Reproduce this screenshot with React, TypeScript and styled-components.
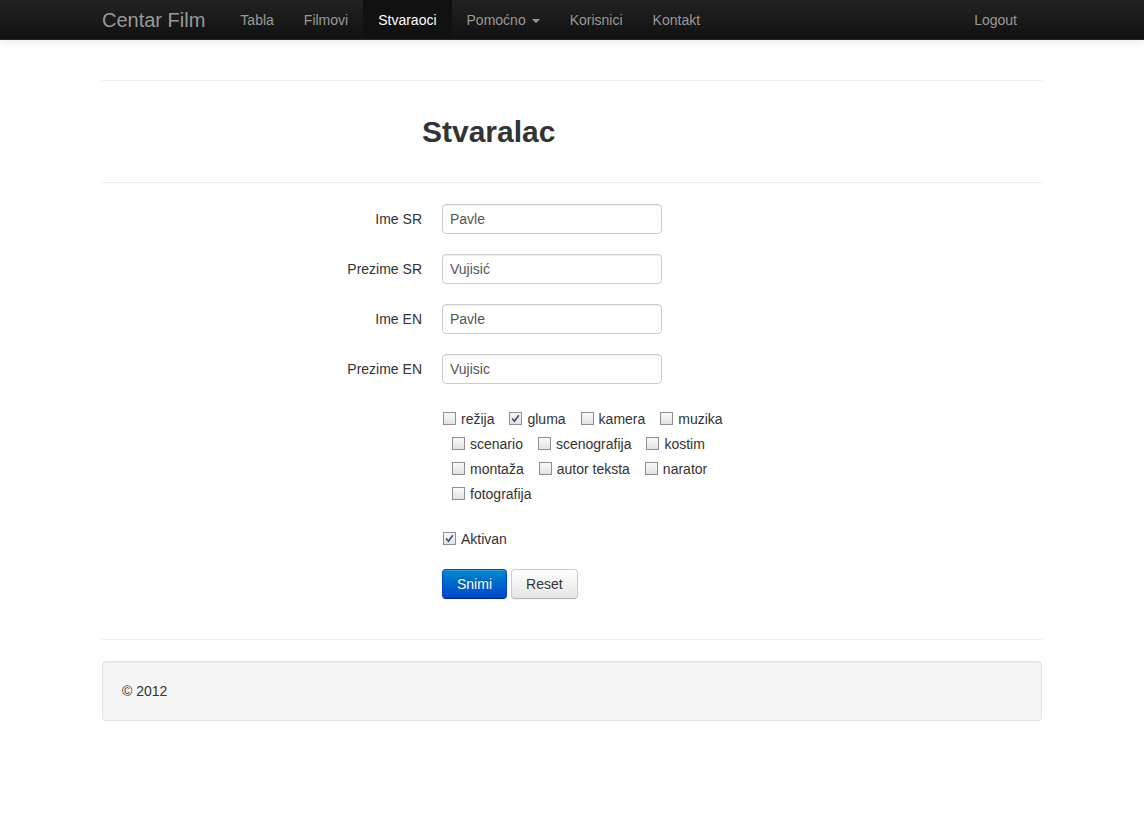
import React from "react";
import styled, { createGlobalStyle } from "styled-components";

const GlobalStyle = createGlobalStyle`
  html, body {
    margin: 0;
    padding: 0;
    background: #fff;
    font-family: "Liberation Sans", Arial, sans-serif;
    font-size: 14px;
    line-height: 20px;
    color: #333;
  }
`;

const Navbar = styled.div`
  height: 40px;
  background: linear-gradient(to bottom, #222222, #111111);
  border-bottom: 1px solid #252525;
  box-shadow: 0 1px 10px rgba(0, 0, 0, 0.1);
  box-sizing: border-box;
`;

const NavInner = styled.div`
  width: 940px;
  margin: 0 auto;
  display: flex;
  height: 40px;
  align-items: stretch;
`;

const Brand = styled.a`
  display: block;
  padding: 9px 20px 9px;
  margin-left: -20px;
  font-size: 20px;
  font-weight: 200;
  line-height: 22px;
  color: #999;
  text-decoration: none;
`;

const NavList = styled.ul<{ $right?: boolean }>`
  display: flex;
  list-style: none;
  margin: 0 ${(p) => (p.$right ? "10px" : "0")} 0 ${(p) => (p.$right ? "auto" : "0")};
  padding: 0;
`;

const NavItem = styled.li<{ $active?: boolean }>`
  display: flex;
  align-items: center;
  padding: 0 15px;
  height: 39px;
  color: ${(p) => (p.$active ? "#fff" : "#999")};
  background: ${(p) => (p.$active ? "#111" : "transparent")};
  cursor: pointer;
`;

const Caret = styled.span`
  display: inline-block;
  width: 0;
  height: 0;
  margin-left: 6px;
  margin-top: 2px;
  border-top: 4px solid #999;
  border-left: 4px solid transparent;
  border-right: 4px solid transparent;
`;

const Container = styled.div`
  width: 940px;
  margin: 0 auto;
  padding-top: 40px;
`;

const Rule = styled.hr`
  margin: 0;
  border: 0;
  border-top: 1px solid #eee;
  border-bottom: 1px solid #fff;
`;

const Heading = styled.h2`
  margin: 30px 0 30px;
  padding-left: 320px;
  font-size: 30px;
  font-weight: bold;
  line-height: 40px;
  color: #333;
`;

const Form = styled.form`
  display: grid;
  grid-template-columns: 320px 1fr;
  column-gap: 20px;
  row-gap: 20px;
  padding-top: 20px;
  padding-bottom: 40px;
`;

const Label = styled.label`
  text-align: right;
  line-height: 30px;
  height: 30px;
`;

const Field = styled.div<{ $offset?: boolean }>`
  grid-column: ${(p) => (p.$offset ? "2" : "auto")};
`;

const Input = styled.input`
  box-sizing: border-box;
  width: 220px;
  height: 30px;
  padding: 4px 7px;
  font-family: inherit;
  font-size: 14px;
  color: #555;
  border: 1px solid #ccc;
  border-radius: 4px;
  box-shadow: inset 0 1px 1px rgba(0, 0, 0, 0.075);
  outline: none;
  display: block;
`;

const Roles = styled.div`
  display: flex;
  flex-direction: column;
  margin-top: 2px;
`;

const RoleRow = styled.div<{ $indent?: boolean }>`
  display: flex;
  height: 25px;
  align-items: center;
  padding-left: ${(p) => (p.$indent ? "10px" : "1px")};
`;

const Check = styled.label`
  display: inline-flex;
  align-items: center;
  margin-right: 15px;
  cursor: pointer;
`;

const Box = styled.span`
  box-sizing: border-box;
  width: 13px;
  height: 13px;
  border: 1px solid #8f8f8f;
  background: linear-gradient(to bottom, #fafafa, #e2e2e2);
  margin-right: 5px;
  display: inline-flex;
  align-items: center;
  justify-content: center;
`;

const Actions = styled.div`
  display: flex;
  gap: 4px;
  margin-top: -2px;
`;

const Button = styled.button<{ $primary?: boolean }>`
  height: 30px;
  padding: 0 14px;
  font-family: inherit;
  font-size: 14px;
  line-height: 20px;
  border-radius: 4px;
  cursor: pointer;
  color: ${(p) => (p.$primary ? "#fff" : "#333")};
  background: ${(p) =>
    p.$primary
      ? "linear-gradient(to bottom, #0088cc, #0044cc)"
      : "linear-gradient(to bottom, #ffffff, #e6e6e6)"};
  border: 1px solid ${(p) => (p.$primary ? "#0044cc" : "#cccccc")};
  border-bottom-color: ${(p) => (p.$primary ? "#002a80" : "#b3b3b3")};
  box-shadow: inset 0 1px 0 rgba(255, 255, 255, 0.2), 0 1px 2px rgba(0, 0, 0, 0.05);
  text-shadow: ${(p) => (p.$primary ? "0 -1px 0 rgba(0,0,0,0.25)" : "0 1px 1px rgba(255,255,255,0.75)")};
`;

const Well = styled.footer`
  margin-top: 20px;
  padding: 19px;
  min-height: 20px;
  background: #f5f5f5;
  border: 1px solid #e3e3e3;
  border-radius: 4px;
  box-shadow: inset 0 1px 1px rgba(0, 0, 0, 0.05);
`;

const CheckBox = ({ label, checked }: { label: string; checked?: boolean }) => (
  <Check>
    <Box>
      {checked && (
        <svg width="9" height="9" viewBox="0 0 9 9">
          <path d="M1.2 4.6 L3.4 7.2 L7.8 1.2" fill="none" stroke="#3a4a8a" strokeWidth="1.6" />
        </svg>
      )}
    </Box>
    {label}
  </Check>
);

const fields = [
  ["Ime SR", "Pavle"],
  ["Prezime SR", "Vujisić"],
  ["Ime EN", "Pavle"],
  ["Prezime EN", "Vujisic"],
];

const roleRows: { items: string[]; indent?: boolean }[] = [
  { items: ["režija", "gluma", "kamera", "muzika"] },
  { items: ["scenario", "scenografija", "kostim"], indent: true },
  { items: ["montaža", "autor teksta", "narator"], indent: true },
  { items: ["fotografija"], indent: true },
];

export default function App() {
  return (
    <>
      <GlobalStyle />
      <Navbar>
        <NavInner>
          <Brand>Centar Film</Brand>
          <NavList>
            <NavItem>Tabla</NavItem>
            <NavItem>Filmovi</NavItem>
            <NavItem $active>Stvaraoci</NavItem>
            <NavItem>
              Pomoćno <Caret />
            </NavItem>
            <NavItem>Korisnici</NavItem>
            <NavItem>Kontakt</NavItem>
          </NavList>
          <NavList $right>
            <NavItem>Logout</NavItem>
          </NavList>
        </NavInner>
      </Navbar>
      <Container>
        <Rule />
        <Heading>Stvaralac</Heading>
        <Rule />
        <Form>
          {fields.map(([label, value]) => (
            <React.Fragment key={label}>
              <Label>{label}</Label>
              <Field>
                <Input defaultValue={value} />
              </Field>
            </React.Fragment>
          ))}
          <Field $offset>
            <Roles>
              {roleRows.map((row, i) => (
                <RoleRow key={i} $indent={row.indent}>
                  {row.items.map((r) => (
                    <CheckBox key={r} label={r} checked={r === "gluma"} />
                  ))}
                </RoleRow>
              ))}
            </Roles>
          </Field>
          <Field $offset>
            <RoleRow>
              <CheckBox label="Aktivan" checked />
            </RoleRow>
          </Field>
          <Field $offset>
            <Actions>
              <Button $primary type="button">Snimi</Button>
              <Button type="button">Reset</Button>
            </Actions>
          </Field>
        </Form>
        <Rule />
        <Well>© 2012</Well>
      </Container>
    </>
  );
}
